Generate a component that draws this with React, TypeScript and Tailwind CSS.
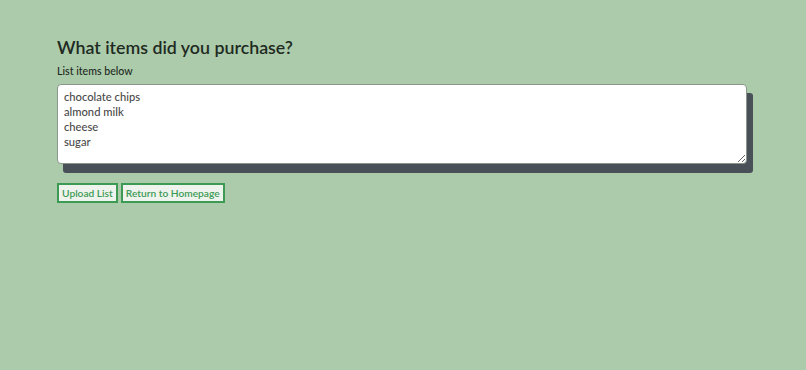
import React from "react";

export default function App() {
  return (
    <div className="w-[806px] h-[370px] bg-[#abcbab] pt-[37px] pl-[57px]" style={{ fontFamily: "Lato, 'Noto Sans', sans-serif" }}>
      <h1 className="text-[17.8px] leading-[21px] font-semibold text-[#1f2a22] m-0">What items did you purchase?</h1>
      <div className="mt-[7px] text-[10.6px] leading-[13px] font-medium text-[#1f2a22]">List items below</div>
      <div className="mt-[6px] relative w-[690px] h-[80px]">
        <div className="absolute left-[6px] top-[9px] w-[690px] h-[80px] bg-[#4a5058] rounded-[3px]" />
        <textarea
          className="relative w-[690px] h-[80px] bg-white border border-[#8a958c] rounded-[4px] px-[6px] pt-[4px] text-[11.2px] leading-[15px] font-medium text-[#4a4a4a] outline-none resize-y block"
          defaultValue={"chocolate chips\nalmond milk\ncheese\nsugar"}
        />
      </div>
      <div className="mt-[19px] flex gap-[3px]">
        <button className="h-[20px] px-[3px] border-2 border-[#3d9a55] bg-[#eef3ee] text-[#3d9a55] text-[10.2px] leading-[13px] font-semibold">Upload List</button>
        <button className="h-[20px] px-[3px] border-2 border-[#3d9a55] bg-[#eef3ee] text-[#3d9a55] text-[10.2px] leading-[13px] font-semibold">Return to Homepage</button>
      </div>
    </div>
  );
}
